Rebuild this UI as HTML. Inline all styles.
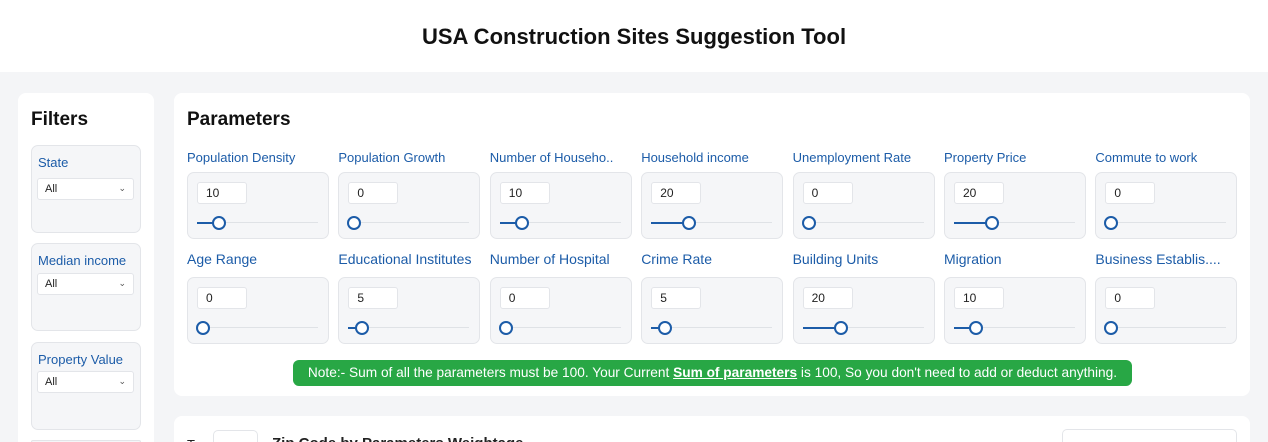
<!DOCTYPE html>
<html style="width:1268px;height:442px;overflow:hidden"><head><style>
*{box-sizing:border-box;margin:0;padding:0}
body{width:1268px;height:442px;overflow:hidden;background:#f4f5f7;font-family:"Liberation Sans",sans-serif;position:relative}
.a{position:absolute}
.hdr{left:0;top:0;width:1268px;height:72px;background:#fff;text-align:center;font-weight:bold;font-size:22px;line-height:74px;color:#111}
.card{background:#fff;border-radius:8px}
.lbl{color:#1c5ca8;font-size:13px;white-space:nowrap}
.lbl2{color:#1c5ca8;font-size:14px;white-space:nowrap}
.box{width:142px;height:67px;background:#f5f6f8;border:1px solid #e3e5e9;border-radius:7px}
.inp{width:50px;height:22px;background:#fff;border:1px solid #e3e5e9;border-radius:3px;font-size:12px;line-height:20px;padding-left:8px;color:#222}
.trk{height:1px;background:#dfe2e6;width:121px}
.fill{height:2px;background:#1c5ca8}
.th{width:14px;height:14px;border:2px solid #1c5ca8;border-radius:50%;background:#fff}
.fb{width:110px;height:88px;background:#f5f6f8;border:1px solid #e3e5e9;border-radius:7px}
.sel{width:97px;height:22px;background:#fff;border:1px solid #e3e5e9;border-radius:3px;font-size:11px;line-height:20px;padding-left:7px;color:#222}
.sel span{position:absolute;right:7px;top:-1px;font-size:9px;color:#555}
</style></head><body>
<div class="a hdr">USA Construction Sites Suggestion Tool</div>
<div class="a card" style="left:18px;top:93px;width:136px;height:349px;border-radius:8px 8px 0 0"></div>
<div class="a" style="left:31px;top:109px;font-size:19px;font-weight:bold;color:#111">Filters</div>
<div class="a fb" style="left:31px;top:145px"></div>
<div class="a lbl" style="left:38px;top:155px">State</div>
<div class="a sel" style="left:37px;top:178px">All<span>&#8964;</span></div>
<div class="a fb" style="left:31px;top:243px"></div>
<div class="a lbl" style="left:38px;top:253px">Median income</div>
<div class="a sel" style="left:37px;top:273px">All<span>&#8964;</span></div>
<div class="a fb" style="left:31px;top:342px"></div>
<div class="a lbl" style="left:38px;top:352px">Property Value</div>
<div class="a sel" style="left:37px;top:371px">All<span>&#8964;</span></div>
<div class="a fb" style="left:31px;top:440px;height:2px;border-bottom:none;border-radius:7px 7px 0 0"></div>

<div class="a card" style="left:174px;top:93px;width:1076px;height:303px"></div>
<div class="a" style="left:187px;top:109px;font-size:19px;font-weight:bold;color:#111">Parameters</div>

<div id="g"></div>
<script>
var r1=[["Population Density",10],["Population Growth",0],["Number of Househo..",10],["Household income",20],["Unemployment Rate",0],["Property Price",20],["Commute to work",0]];
var r2=[["Age Range",0],["Educational Institutes",5],["Number of Hospital",0],["Crime Rate",5],["Building Units",20],["Migration",10],["Business Establis....",0]];
var h="";
function row(arr,ly,by,cls){arr.forEach(function(p,i){var x=187+i*151.4;var off=6+p[1]*1.6;
h+='<div class="a '+cls+'" style="left:'+x+'px;top:'+ly+'px">'+p[0]+'</div>';
h+='<div class="a box" style="left:'+x+'px;top:'+by+'px"></div>';
h+='<div class="a inp" style="left:'+(x+10)+'px;top:'+(by+10)+'px">'+p[1]+'</div>';
h+='<div class="a trk" style="left:'+(x+10)+'px;top:'+(by+50)+'px"></div>';
h+='<div class="a fill" style="left:'+(x+10)+'px;top:'+(by+50)+'px;width:'+off+'px"></div>';
h+='<div class="a th" style="left:'+(x+10+off-7)+'px;top:'+(by+44)+'px"></div>';});}
row(r1,150,172,"lbl");row(r2,251,277,"lbl2");
document.getElementById("g").innerHTML=h;
</script>
<div class="a" style="left:293px;top:360px;width:839px;height:26px;background:#28a745;border-radius:6px;color:#fff;font-size:13.7px;line-height:26px;text-align:center">Note:- Sum of all the parameters must be 100. Your Current <b><u>Sum of parameters</u></b> is 100, So you don't need to add or deduct anything.</div>

<div class="a card" style="left:174px;top:416px;width:1076px;height:26px;border-radius:8px 8px 0 0"></div>
<div class="a" style="left:187px;top:437px;font-size:13px;color:#222">Top</div>
<div class="a" style="left:213px;top:430px;width:45px;height:12px;border:1px solid #e3e5e9;border-bottom:none;border-radius:5px 5px 0 0;background:#fff"></div>
<div class="a" style="left:272px;top:435px;font-size:15px;font-weight:bold;color:#222">Zip Code by Parameters Weightage</div>
<div class="a" style="left:1062px;top:429px;width:175px;height:13px;border:1px solid #e3e5e9;border-bottom:none;border-radius:5px 5px 0 0;background:#fff"></div>
</body></html>
